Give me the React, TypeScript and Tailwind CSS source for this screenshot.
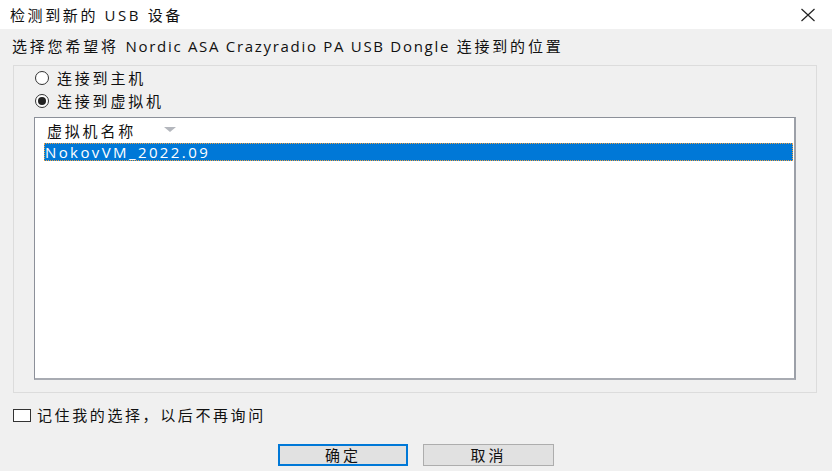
import React from "react";

const font = {
  fontFamily: '"Open Sans", "Noto Sans CJK SC", sans-serif',
};

function Radio({ checked, label }: { checked: boolean; label: string }) {
  return (
    <div className="flex items-center h-[20px]">
      <span className="ml-[1px] w-[14px] h-[14px] rounded-full border border-[#333333] bg-white flex items-center justify-center">
        {checked && <span className="w-[8px] h-[8px] rounded-full bg-[#222222]" />}
      </span>
      <span className="ml-[8px] text-[15px] tracking-[2.8px] text-[#111111] leading-[20px]">{label}</span>
    </div>
  );
}

export default function App() {
  return (
    <div className="w-[832px] h-[471px] bg-[#f0f0f0] flex flex-col text-black" style={font}>
      {/* title bar */}
      <div className="h-[29px] bg-white flex items-center justify-between pl-[10px] pr-[16px]">
        <span className="text-[15px] tracking-[2.6px] leading-[20px] text-[#111111]">检测到新的 USB 设备</span>
        <svg width="16" height="14" viewBox="0 0 16 14" className="text-[#222222]">
          <path d="M1.5 1 L14.5 13 M14.5 1 L1.5 13" stroke="currentColor" strokeWidth="1.2" fill="none" />
        </svg>
      </div>

      <div className="flex flex-col px-[12px]">
        <div className="mt-[7px] h-[20px] text-[15px] tracking-[2.8px] leading-[20px] text-[#111111]">
          选择您希望将 <span className="tracking-[1.7px]">Nordic ASA Crazyradio PA USB Dongle</span> 连接到的位置
        </div>

        {/* group box */}
        <div className="mt-[9px] ml-[1px] w-[804px] h-[328px] border border-[#dcdcdc] flex flex-col pl-[20px] pr-[20px] pt-[2px] pb-[12px]">
          <div className="flex flex-col gap-[3px]">
            <Radio checked={false} label="连接到主机" />
            <Radio checked={true} label="连接到虚拟机" />
          </div>

          {/* list view */}
          <div className="mt-[6px] flex-1 bg-white border border-[#8c9099] border-r-[2px] border-b-[2px] border-r-[#9ca0a8] border-b-[#a8abb2] flex flex-col">
            <div className="h-[25px] flex items-center pl-[12px]">
              <span className="text-[15px] tracking-[2.8px] leading-[20px] text-[#111111]">虚拟机名称</span>
              <svg width="12" height="6" viewBox="0 0 12 6" className="ml-[28px] mt-[-2px]">
                <path d="M0 0 L12 0 L6 5 Z" fill="#b4b7bd" />
              </svg>
            </div>
            <div className="ml-[9px] mr-[1px] h-[18px] bg-[#0078d7] outline-1 outline-dotted outline-[#f0a040] -outline-offset-1 flex items-center pl-[1px]">
              <span className="text-[15px] tracking-[2.4px] leading-[18px] text-white">NokovVM_2022.09</span>
            </div>
          </div>
        </div>

        {/* remember choice */}
        <div className="mt-[14px] ml-[1px] flex items-center h-[16px]">
          <span className="w-[18px] h-[13px] border border-[#333333] bg-white" />
          <span className="ml-[6px] text-[15px] tracking-[2.6px] leading-[20px] text-[#111111]">
            记住我的选择，以后不再询问
          </span>
        </div>

        {/* buttons */}
        <div className="mt-[21px] flex justify-center gap-[15px]">
          <button className="w-[130px] h-[22px] bg-[#e1e1e1] border-2 border-[#0078d7] flex items-center justify-center text-[15px] tracking-[3px] leading-[18px] text-[#111111]">
            确定
          </button>
          <button className="w-[131px] h-[22px] bg-[#e1e1e1] border border-[#adadad] flex items-center justify-center text-[15px] tracking-[3px] leading-[18px] text-[#111111]">
            取消
          </button>
        </div>
      </div>
    </div>
  );
}
